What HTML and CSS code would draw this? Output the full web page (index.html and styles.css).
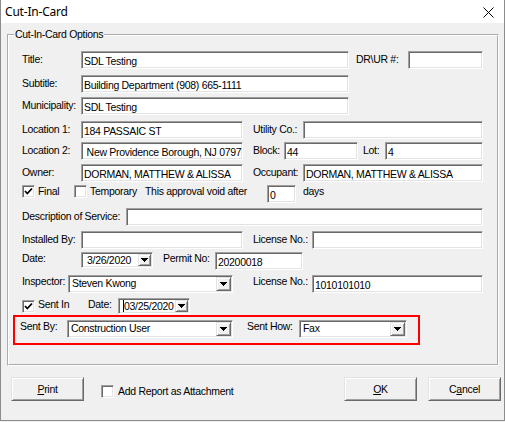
FILE: index.html
```html
<!DOCTYPE html>
<html lang="en">
<head>
    <meta charset="UTF-8">
    <meta name="viewport" content="width=device-width, initial-scale=1.0">
    <title>Cut-In-Card</title>
    <link rel="stylesheet" href="styles.css">
</head>
<body>

<div class="dialog">

    <div class="titlebar">
        <span class="caption">Cut-In-Card</span>
        <svg class="close" width="11" height="11" viewBox="0 0 11 11">
            <path d="M0.5 0.5L10.5 10.5M10.5 0.5L0.5 10.5" stroke="#000" stroke-width="1" fill="none"/>
        </svg>
    </div>

    <fieldset class="options">
        <legend>Cut-In-Card Options</legend>

        <div class="rows">
            <div class="row">
                <span class="lbl">Title:</span>
                <div class="edit w-title">SDL Testing</div>
                <span class="lbl lbl-drur">DR\UR #:</span>
                <div class="edit w-drur"></div>
            </div>

            <div class="row">
                <span class="lbl">Subtitle:</span>
                <div class="edit w-title">Building Department (908) 665-1111</div>
            </div>

            <div class="row">
                <span class="lbl">Municipality:</span>
                <div class="edit w-title">SDL Testing</div>
            </div>

            <div class="row">
                <span class="lbl">Location 1:</span>
                <div class="edit w-loc">184 PASSAIC ST</div>
                <span class="lbl lbl-side">Utility Co.:</span>
                <div class="edit w-side"></div>
            </div>

            <div class="row">
                <span class="lbl">Location 2:</span>
                <div class="edit w-loc">&nbsp;New Providence Borough, NJ 0797</div>
                <span class="lbl lbl-block">Block:</span>
                <div class="edit w-block">44</div>
                <span class="lbl lbl-lot">Lot:</span>
                <div class="edit w-lot">4</div>
            </div>

            <div class="row">
                <span class="lbl">Owner:</span>
                <div class="edit w-loc">DORMAN, MATTHEW &amp; ALISSA</div>
                <span class="lbl lbl-side">Occupant:</span>
                <div class="edit w-side">DORMAN, MATTHEW &amp; ALISSA</div>
            </div>

            <div class="row">
                <label class="check check-final">
                    <span class="checkbox">
                        <svg width="9" height="9" viewBox="0 0 9 9"><path d="M1 4L3.3 6.5L8 1.5" stroke="#000" stroke-width="1.8" fill="none"/></svg>
                    </span>
                    Final
                </label>
                <label class="check check-temp">
                    <span class="checkbox"></span>
                    Temporary
                </label>
                <span class="lbl lbl-void">This approval void after</span>
                <div class="edit w-days">0</div>
                <span class="lbl lbl-days">days</span>
            </div>

            <div class="row">
                <span class="lbl lbl-desc">Description of Service:</span>
                <div class="edit w-desc"></div>
            </div>

            <div class="row">
                <span class="lbl">Installed By:</span>
                <div class="edit w-loc"></div>
                <span class="lbl lbl-lic">License No.:</span>
                <div class="edit w-lic"></div>
            </div>

            <div class="row row-date">
                <span class="lbl">Date:</span>
                <div class="datebox">
                    <span class="date-text">3/26/2020</span>
                    <span class="drop drop-small"><svg width="7" height="4" viewBox="0 0 7 4"><path d="M0 0H7L3.5 4Z"/></svg></span>
                </div>
                <span class="lbl lbl-permit">Permit No:</span>
                <div class="edit w-permit">20200018</div>
            </div>

            <div class="row row-insp">
                <span class="lbl lbl-insp">Inspector:</span>
                <div class="combo w-insp">
                    <span class="combo-text">Steven Kwong</span>
                    <span class="drop"><svg width="7" height="4" viewBox="0 0 7 4"><path d="M0 0H7L3.5 4Z"/></svg></span>
                </div>
                <span class="lbl lbl-lic lbl-lic2">License No.:</span>
                <div class="edit w-lic">1010101010</div>
            </div>

            <div class="row row-sent">
                <label class="check check-sent">
                    <span class="checkbox">
                        <svg width="9" height="9" viewBox="0 0 9 9"><path d="M1 4L3.3 6.5L8 1.5" stroke="#000" stroke-width="1.8" fill="none"/></svg>
                    </span>
                    Sent In
                </label>
                <span class="lbl lbl-date2">Date:</span>
                <div class="datebox">
                    <span class="date-text"><span class="caret">0</span>3/25/2020</span>
                    <span class="drop drop-small"><svg width="7" height="4" viewBox="0 0 7 4"><path d="M0 0H7L3.5 4Z"/></svg></span>
                </div>
            </div>

            <!-- delivery fields, outlined in red -->
            <div class="sent-box">
                <span class="lbl lbl-sentby">Sent By:</span>
                <div class="combo w-sentby">
                    <span class="combo-text">Construction User</span>
                    <span class="drop"><svg width="7" height="4" viewBox="0 0 7 4"><path d="M0 0H7L3.5 4Z"/></svg></span>
                </div>
                <span class="lbl lbl-senthow">Sent How:</span>
                <div class="combo w-senthow">
                    <span class="combo-text">Fax</span>
                    <span class="drop"><svg width="7" height="4" viewBox="0 0 7 4"><path d="M0 0H7L3.5 4Z"/></svg></span>
                </div>
            </div>
        </div>
    </fieldset>

    <div class="button-bar">
        <button type="button" class="btn"><u>P</u>rint</button>
        <label class="check check-attach">
            <span class="checkbox"></span>
            Add Report as Attachment
        </label>
        <button type="button" class="btn btn-ok"><u>O</u>K</button>
        <button type="button" class="btn btn-cancel">C<u>a</u>ncel</button>
    </div>

</div>

</body>
</html>
```

FILE: styles.css
```css
body {
    margin: 0;
    background: #f0f0f0;
    font-family: "Liberation Sans", Arial, sans-serif;
    font-size: 10.5px;
    letter-spacing: -0.3px;
    color: #000;
}

.dialog {
    width: 505px;
    height: 421px;
    box-sizing: border-box;
    background: #f0f0f0;
    border: 1px solid #8c8c8c;
    border-top: none;
}

/* Title bar */
.titlebar {
    height: 23px;
    background: #fff;
    display: flex;
    align-items: center;
    justify-content: space-between;
    padding: 0 10px 0 4px;
}

.caption {
    font-family: "Noto Sans", "Liberation Sans", sans-serif;
    font-size: 12px;
    letter-spacing: -0.2px;
}

.close {
    margin-top: 1px;
}

/* Group box */
.options {
    margin: 5px 0 0 6px;
    width: 492px;
    box-sizing: border-box;
    padding: 0 0 19px 0;
    border: 2px groove #fff;
    min-inline-size: auto;
}

.options legend {
    margin-left: 5px;
    padding: 0 1px;
    line-height: 13px;
}

.rows {
    display: grid;
    grid-template-rows: 24px 22px 24px 21px 22px 21px 23px 23px 21px 23px 23px 17px 30px;
    padding: 10px 0 0 4px;
}

.row {
    display: flex;
    align-items: flex-start;
    padding-left: 9px;
}

.lbl {
    line-height: 13px;
    padding-top: 2px;
    white-space: nowrap;
    width: 59px;
    flex: none;
}

.row-date .lbl,
.row-insp .lbl,
.row-sent .lbl,
.lbl-void,
.lbl-days {
    padding-top: 0;
}

.lbl-drur { margin-left: 7px; width: 52px; }
.lbl-side { margin-left: 10px; width: 50px; }
.lbl-block { margin-left: 10px; width: 31px; }
.lbl-lot { margin-left: 5px; width: 22px; }
.lbl-void { width: 122px; }
.lbl-days { width: auto; margin-left: 7px; }
.lbl-desc { width: 104px; }
.lbl-lic { margin-left: 10px; width: 59px; }
.lbl-permit { margin-left: 10px; width: 52px; }
.lbl-insp { width: 46px; }
.lbl-lic2 { margin-left: 20px; }
.lbl-date2 { width: 30px; }

/* Sunken edit box */
.edit,
.combo,
.datebox,
.checkbox {
    box-sizing: border-box;
    background: #fff;
    border: 1px solid;
    border-color: #a0a0a0 #fff #fff #a0a0a0;
    box-shadow: inset 1px 1px 0 #696969, inset -1px -1px 0 #e3e3e3;
    flex: none;
}

.edit {
    height: 18px;
    line-height: 13px;
    padding: 3px 2px 0;
    white-space: nowrap;
    overflow: hidden;
}

.w-title { width: 268px; }
.w-drur { width: 75px; }
.w-loc { width: 162px; }
.w-side { width: 180px; }
.w-block { width: 74px; }
.w-lot { width: 98px; }
.w-days { width: 29px; }
.w-desc { width: 357px; }
.w-lic { width: 171px; }
.w-permit { width: 88px; }
.w-insp { width: 165px; }
.w-sentby { width: 166px; }
.w-senthow { width: 108px; }

/* Drop-down combos and date pickers */
.combo,
.datebox {
    display: flex;
    height: 18px;
}

.datebox {
    width: 72px;
    height: 16px;
}

.combo-text,
.date-text {
    flex: 1;
    line-height: 13px;
    white-space: nowrap;
    overflow: hidden;
}

.combo-text {
    padding: 1px 0 0 3px;
}

.date-text {
    padding: 1px 0 0 5px;
}

.caret {
    border-left: 1px solid #000;
    margin-left: -1px;
}

.drop {
    box-sizing: border-box;
    width: 15px;
    margin: 1px;
    background: #f0f0f0;
    border: 1px solid;
    border-color: #e3e3e3 #696969 #696969 #e3e3e3;
    box-shadow: inset 1px 1px 0 #fff, inset -1px -1px 0 #a0a0a0;
    display: flex;
    align-items: center;
    justify-content: center;
}

.drop svg {
    display: block;
    shape-rendering: crispEdges;
}

.drop-small {
    width: 13px;
}

/* Check boxes */
.check {
    display: flex;
    align-items: flex-start;
    gap: 3px;
    line-height: 13px;
    flex: none;
}

.checkbox {
    width: 13px;
    height: 13px;
    display: flex;
    align-items: center;
    justify-content: center;
}

.checkbox svg {
    display: block;
}

.check-final { width: 52px; }
.check-temp { width: 71px; }
.check-sent { width: 66px; }

.row-sent .checkbox {
    margin-top: 2px;
}

/* Red outline round the delivery fields */
.sent-box {
    display: flex;
    align-items: flex-start;
    box-sizing: border-box;
    width: 407px;
    height: 30px;
    border: 2px solid #ff0000;
    padding: 3px 0 0 5px;
}

.sent-box .lbl {
    padding-top: 0;
}

.lbl-sentby { width: 47px; }
.lbl-senthow { margin-left: 14px; width: 52px; }

/* Bottom buttons */
.button-bar {
    display: flex;
    align-items: flex-start;
    margin-top: 11px;
    padding: 0 3px 0 10px;
}

.btn {
    box-sizing: border-box;
    width: 73px;
    height: 24px;
    padding: 0;
    background: #f0f0f0;
    border: 1px solid;
    border-color: #e3e3e3 #696969 #696969 #e3e3e3;
    box-shadow: inset 1px 1px 0 #fff, inset -1px -1px 0 #a0a0a0;
    font: inherit;
    letter-spacing: inherit;
    color: #000;
}

.check-attach {
    margin: 8px 0 0 17px;
    gap: 4px;
}

.btn-ok {
    margin-left: auto;
}

.btn-cancel {
    margin-left: 11px;
}
```
